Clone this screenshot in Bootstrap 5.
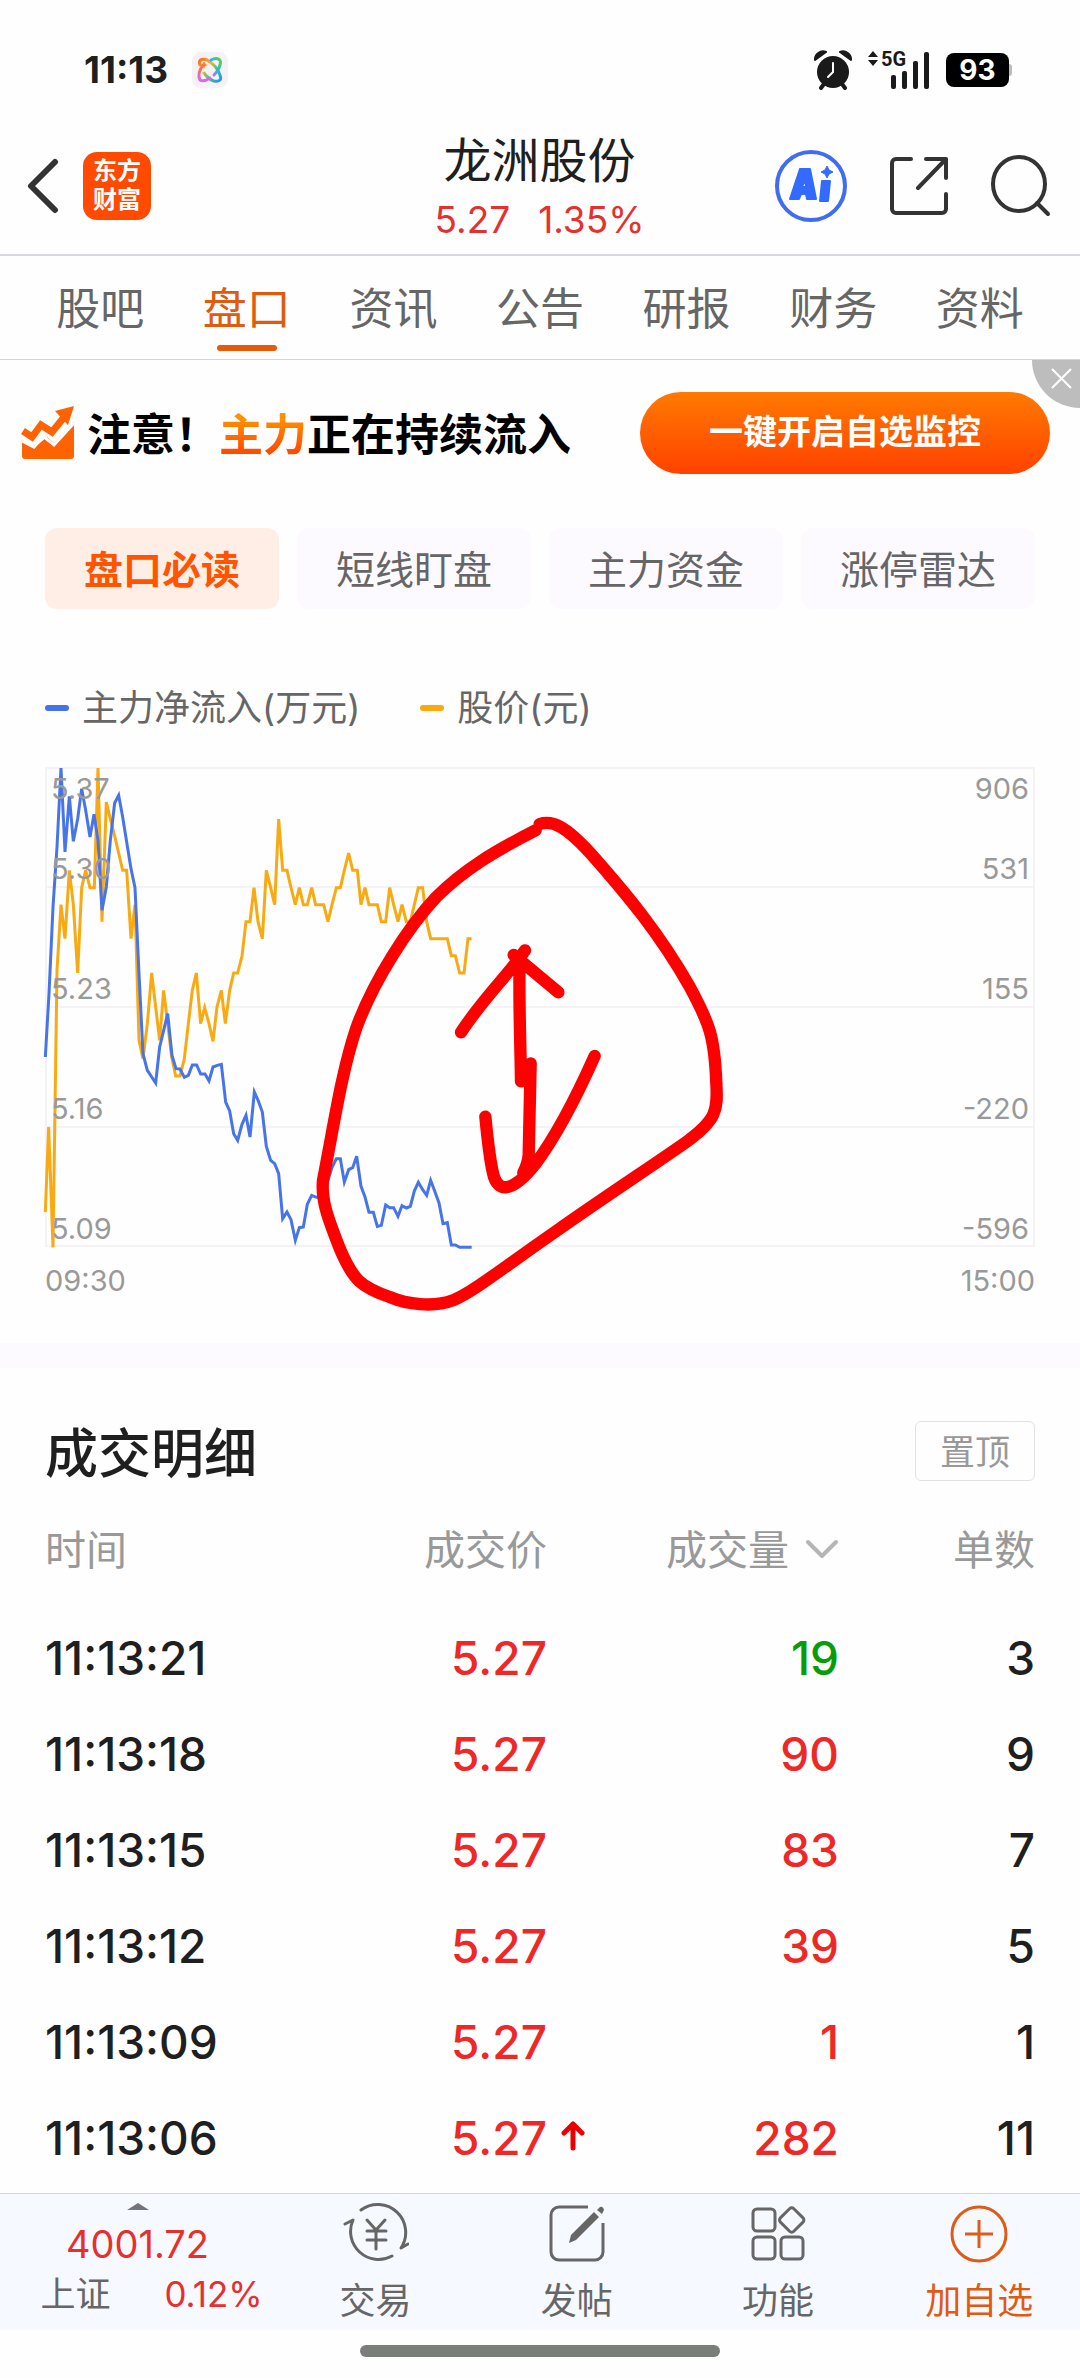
<!DOCTYPE html>
<html lang="zh-CN">
<head>
<meta charset="utf-8">
<meta name="viewport" content="width=device-width, initial-scale=1">
<title>龙洲股份 - 盘口</title>
<link href="https://cdn.jsdelivr.net/npm/bootstrap@5.3.0/dist/css/bootstrap.min.css" rel="stylesheet">
<style>
body{font-family:Inter,"Noto Sans CJK SC",sans-serif;background:#fefefe;color:#1f1f1f;font-weight:400}
button{font-family:inherit}
svg{display:block;flex:none}
.up{color:#e5302e}
.statusbar{height:118px;padding:22px 68px 0 84px}
.clock{font-size:37px;font-weight:700;line-height:56px}
.battery{width:63px;height:34px;border-radius:8px;background:#000;color:#fff;font-size:28px;font-weight:700;line-height:34px;text-align:center}
.nub{width:3px;height:12px;background:#bbb;border-radius:0 3px 3px 0}
.titlebar{height:138px;border-bottom:2px solid #d8d7de;padding:0 28px 0 27px}
.side{flex:1 1 0}
.tools{gap:42px}
.applogo{width:68px;height:68px;border-radius:14px;background:#ff4a00;color:#fff;font-size:24px;font-weight:700;line-height:29px;text-align:center;padding-top:4px}
.stocktitle{padding-top:6px}
.stockname{font-size:48px;line-height:62px}
.quote{font-size:37px;line-height:56px;gap:28px}
.tabs{height:104px;padding:0 27px;border-bottom:1px solid #d6d6da}
.tabs .nav-link{padding:0;height:103px;font-size:44px;line-height:106px;color:#666;position:relative;border-radius:0}
.tabs .nav-link.active{color:#e05a10}
.tabs .nav-link.active::after{content:"";position:absolute;left:50%;margin-left:-30px;bottom:8px;width:60px;height:6px;border-radius:3px;background:#e65a0a}
.banner{height:146px;padding:0 30px 0 21px;position:relative}
.notice{font-size:44px;font-weight:700;color:#000;line-height:60px;margin:3px 0 0 13px}
.hot{background:linear-gradient(#ff9000 20%,#ff4d00 80%);-webkit-background-clip:text;background-clip:text;color:transparent}
.cta{width:410px;height:82px;border:0;border-radius:41px;background:linear-gradient(#ff7a00,#ff4200);color:#fff;font-size:34px;font-weight:700;padding:0 0 4px}
.cta:hover{color:#fff}
.dismiss{position:absolute;right:0;top:0;width:48px;height:48px;border:0;padding:0;background:#bdbdbd;border-radius:0 0 0 48px}
.pane{padding-left:45px;padding-right:45px}
.pills{gap:18px;padding-top:22px}
.pills .btn{flex:1 1 0;height:81px;border:0;border-radius:12px;background:#fdfaff;color:#666;font-size:39px;line-height:56px;padding:2px 0 0}
.pills .btn.active{background:#ffeee6;color:#ff5500;font-weight:700}
.legendrow{padding-top:72px;font-size:36px;line-height:54px;color:#666;gap:60px}
.dash{width:24px;height:6px;border-radius:3px;margin-right:13px}
.chartbox{padding-top:33px;position:relative;z-index:1}
.chartbox svg{width:100%;height:auto;overflow:visible}
.axis{font-size:29px;fill:#999;font-family:Inter,sans-serif}
.times{font-size:29px;line-height:40px;color:#999;padding-top:15px}
.band{height:25px;background:#fdfaff;margin-top:42px}
.sect{padding-top:50px;padding-bottom:7px}
.sect h2{font-size:53px;line-height:60px;font-weight:500;margin:0;padding-top:6px}
.pin{width:120px;height:60px;border:1px solid #e2e2e4;border-radius:6px;background:transparent;color:#999;font-size:35px;line-height:50px;padding:2px 0 0}
.deals{width:100%;table-layout:fixed;margin-top:17px}
.deals th{height:109px;font-size:41px;line-height:60px;font-weight:400;color:#999;padding:0 0 11px;text-align:right;vertical-align:middle}
.deals td{height:96px;font-size:46px;line-height:60px;font-weight:500;padding:0;text-align:right;vertical-align:middle}
.deals th:first-child,.deals td:first-child{text-align:left}
.deals .rise{color:#ee2826}
.deals .fall{color:#089c08}
.tick{position:absolute;left:100%;top:50%;margin:-17px 0 0 14px}
.dock{height:137px;background:#f6f9ff;border-top:1px solid #d3d7da}
.dock a{color:#666;text-decoration:none;font-size:36px;line-height:46px}
.dock .indexbox{width:275px;padding:9px 0 0}
.dock .act{flex:1 1 0;padding-top:8px}
.dock .act span{margin-top:14px}
.dock .addfav{color:#e05a10}
.idx{font-size:38px;line-height:48px;margin-top:10px}
.idxrow{gap:54px;padding:3px 0 0 28px;font-size:35px}
.homearea{height:47px;padding-top:15px}
.homebar{width:360px;height:12px;border-radius:6px;background:#7b7d7a}
</style>
<script src="https://cdn.jsdelivr.net/npm/bootstrap@5.3.0/dist/js/bootstrap.bundle.min.js"></script>
</head>
<body>
<div class="statusbar d-flex align-items-center justify-content-between">
  <div class="d-flex align-items-center">
    <span class="clock">11:13</span>
    <svg class="ms-4" width="36" height="36" viewBox="0 0 36 36" fill="none" stroke-width="3" stroke-linecap="round">
      <defs><linearGradient id="rb" x1="0" y1="0" x2="1" y2="1"><stop offset="0" stop-color="#ff6a1f"/><stop offset=".35" stop-color="#f2b62e"/><stop offset=".65" stop-color="#35c9a0"/><stop offset="1" stop-color="#2c8cf5"/></linearGradient>
      <linearGradient id="rc" x1="1" y1="0" x2="0" y2="1"><stop offset="0" stop-color="#5bd63c"/><stop offset=".5" stop-color="#28b5e8"/><stop offset="1" stop-color="#d768f0"/></linearGradient>
      <linearGradient id="rd" x1="0" y1="0" x2="0" y2="1"><stop offset="0" stop-color="#ff7a22"/><stop offset="1" stop-color="#d768f0"/></linearGradient></defs>
      <rect width="36" height="36" rx="9" fill="#f5f2f5"/>
      <path d="M8 13C6 8 10 6 15 8c7 4 11 9 13 15 2 5-1 7-6 6-4-1-7-4-10-8" stroke="url(#rb)"/>
      <path d="M19 8c6-3 11-1 9 5-1 4-3 7-6 10" stroke="url(#rc)"/>
      <path d="M12 12C7 18 6 24 8 28c3 2 7 0 10-2" stroke="url(#rd)"/>
      <path d="M12 9l1 3 3 1-3 1-1 3-1-3-3-1 3-1z" fill="#ff7a22"/>
    </svg>
  </div>
  <div class="d-flex align-items-center">
    <svg width="38" height="40" viewBox="0 0 38 40">
      <path d="M1 10A8 8 0 0 1 12 2zM37 10A8 8 0 0 0 26 2z" fill="#1a1a1a" stroke="#1a1a1a" stroke-width="2" stroke-linejoin="round"/>
      <circle cx="19" cy="22" r="16" fill="#1a1a1a"/><path d="M10 34l-3 4M28 34l3 4" stroke="#1a1a1a" stroke-width="4" stroke-linecap="round"/>
      <path d="M19 13v9l-5 5" fill="none" stroke="#fff" stroke-width="2" stroke-linecap="round"/>
    </svg>
    <svg class="ms-3" width="62" height="56" viewBox="0 -8 62 56" fill="#1a1a1a">
      <path d="M5 1l5 6H0zM5 16l5-6H0z"/>
      <text x="13" y="16" font-family="Roboto,sans-serif" font-weight="700" font-size="20">5G</text>
      <rect x="23" y="25" width="5" height="14" rx="2"/><rect x="34" y="21" width="5" height="18" rx="2"/><rect x="45" y="11" width="5" height="28" rx="2"/><rect x="56" y="2" width="5" height="37" rx="2"/>
    </svg>
    <span class="battery ms-3">93</span><span class="nub"></span>
  </div>
</div>

<header class="titlebar d-flex align-items-center">
  <div class="side d-flex align-items-center gap-4">
    <a href="#" aria-label="返回"><svg width="32" height="56" viewBox="0 0 32 56" fill="none" stroke="#333" stroke-width="6" stroke-linecap="round" stroke-linejoin="round"><path d="M28 4L4 28l24 24"/></svg></a>
    <div class="applogo">东方<br>财富</div>
  </div>
  <div class="stocktitle text-center">
    <div class="stockname">龙洲股份</div>
    <div class="quote up d-flex justify-content-center"><span>5.27</span><span>1.35%</span></div>
  </div>
  <div class="side tools d-flex align-items-center justify-content-end">
    <a href="#" aria-label="AI"><svg width="74" height="74" viewBox="0 0 74 74"><circle cx="37" cy="37" r="34" fill="#fff" stroke="#3f6cf2" stroke-width="4"/>
      <path d="M26 20h10l6 30h-9l-1-5h-5l-2 5h-9zM31 30l-3 8h4z" fill="#336aff" stroke="#336aff" stroke-width="2" stroke-linejoin="round" fill-rule="evenodd"/>
      <path d="M48 32h8l-2 20h-8z" fill="#336aff" stroke="#336aff" stroke-width="2" stroke-linejoin="round"/><path d="M53 17l2 4 4 2-4 2-2 4-2-4-4-2 4-2z" fill="#336aff" stroke="#336aff" stroke-width="1"/></svg></a>
    <a href="#" aria-label="分享"><svg width="58" height="60" viewBox="0 0 58 60" fill="none" stroke="#333" stroke-width="4" stroke-linecap="round" stroke-linejoin="round"><path d="M21 3H6a4 4 0 0 0-4 4v46a4 4 0 0 0 4 4h46a4 4 0 0 0 4-4V38M36 3h20v19M56 3L28 32"/></svg></a>
    <a href="#" aria-label="搜索"><svg width="62" height="64" viewBox="0 0 62 64" fill="none" stroke="#333" stroke-width="4" stroke-linecap="round"><ellipse cx="29" cy="30" rx="26" ry="27"/><path d="M47 49l11 11"/></svg></a>
  </div>
</header>

<nav class="tabs nav nav-justified flex-nowrap">
  <a class="nav-link" href="#">股吧</a><a class="nav-link active" href="#">盘口</a><a class="nav-link" href="#">资讯</a><a class="nav-link" href="#">公告</a><a class="nav-link" href="#">研报</a><a class="nav-link" href="#">财务</a><a class="nav-link" href="#">资料</a>
</nav>

<main>
<section class="banner d-flex align-items-center justify-content-between">
  <div class="d-flex align-items-center">
    <svg width="53" height="54" viewBox="0 0 53 54"><path d="M1 34l12 8 13-11 7 6L53 16v34a3 3 0 0 1-3 3H4a3 3 0 0 1-3-3z" fill="#ff6200"/><path d="M1 35l12 6 9-11 11 9L53 17" fill="none" stroke="#fefefe" stroke-width="3"/><path d="M2 25l9 6 9-12 11 7L44 10" fill="none" stroke="#ff6200" stroke-width="7"/><path d="M34 5L53 0l-6 19z" fill="#ff6200"/></svg>
    <span class="notice">注意！<span class="hot">主力</span>正在持续流入</span>
  </div>
  <button class="btn cta" type="button">一键开启自选监控</button>
  <button class="dismiss" type="button" aria-label="关闭"><svg width="48" height="48" viewBox="0 0 48 48" stroke="#fff" stroke-width="2"><path d="M20 9l19 19M39 9L20 28"/></svg></button>
</section>

<div class="pane">
  <div class="pills d-flex">
    <button class="btn active" type="button">盘口必读</button><button class="btn" type="button">短线盯盘</button><button class="btn" type="button">主力资金</button><button class="btn" type="button">涨停雷达</button>
  </div>
  <div class="legendrow d-flex">
    <span class="d-flex align-items-center"><i class="dash" style="background:#4472ee"></i>主力净流入(万元)</span>
    <span class="d-flex align-items-center"><i class="dash" style="background:#fba80a"></i>股价(元)</span>
  </div>
  <div class="chartbox">
    <svg viewBox="0 0 990 478" role="img" aria-label="主力净流入与股价">
      <path d="M1 0H989V478H1zM1 119H989M1 239H989M1 359H989" fill="none" stroke="#f4f2f4" stroke-width="2"/>
      <svg x="0" y="0" width="990" height="478" viewBox="136 323 2970 1434" overflow="visible" fill="none">
        <polyline stroke="#f9aa12" stroke-width="9" points="137,1655 147,1400 160,1761 172,930 184,733 196,835 209,630 221,733 234,938 246,682 258,630 271,682 284,682 295,323 307,784 320,425 332,476 345,527 357,578 369,630 381,630 394,835 406,733 418,1140 430,1195 443,1090 456,938 468,1040 480,1140 492,990 504,1090 516,1190 528,1247 541,1247 554,1195 566,1090 578,990 590,938 603,1090 615,1042 628,1090 640,1143 652,1040 665,990 677,1090 690,990 702,938 714,938 727,887 739,784 751,784 763,682 775,784 788,835 800,630 813,682 825,733 837,476 849,630 862,630 874,682 887,733 899,682 911,733 923,733 936,682 948,733 972,733 985,784 997,733 1010,682 1022,682 1034,630 1047,578 1059,630 1073,630 1084,733 1096,682 1108,733 1133,733 1145,784 1158,784 1170,682 1182,733 1195,784 1207,733 1220,784 1232,784 1244,733 1256,682 1269,682 1281,784 1293,835 1343,835 1355,886 1367,886 1380,938 1393,938 1405,835 1416,835"/>
        <polyline stroke="#4774e8" stroke-width="9" points="137,1190 148,1000 160,740 172,560 184,323 196,575 209,408 221,543 234,476 246,385 258,450 271,530 283,462 295,540 307,750 320,680 332,540 345,428 357,405 369,470 381,545 394,625 406,682 418,940 430,1180 443,1230 468,1268 480,1160 492,1110 504,1060 517,1185 529,1225 541,1226 554,1251 566,1245 578,1214 591,1214 603,1241 616,1241 628,1262 640,1220 653,1215 665,1212 678,1325 690,1352 702,1420 714,1440 727,1392 739,1365 751,1430 764,1295 776,1322 788,1355 800,1458 813,1500 825,1510 837,1540 849,1675 862,1655 874,1678 887,1740 899,1702 911,1700 923,1632 936,1605 950,1611 962,1611 985,1560 997,1522 1010,1495 1022,1495 1034,1565 1047,1528 1059,1522 1071,1488 1084,1578 1096,1610 1108,1656 1121,1656 1133,1698 1145,1695 1158,1634 1170,1642 1182,1642 1195,1668 1207,1636 1220,1643 1232,1638 1244,1592 1256,1566 1269,1588 1281,1605 1293,1560 1305,1592 1318,1628 1330,1690 1343,1687 1355,1754 1367,1754 1380,1761 1416,1761"/>
      </svg>
      <g class="axis">
        <text x="6" y="31">5.37</text><text x="6" y="111">5.30</text><text x="6" y="231">5.23</text><text x="6" y="351">5.16</text><text x="6" y="471">5.09</text>
        <g text-anchor="end"><text x="984" y="31">906</text><text x="984" y="111">531</text><text x="984" y="231">155</text><text x="984" y="351">-220</text><text x="984" y="471">-596</text></g>
      </g>
      <svg x="0" y="0" width="990" height="478" viewBox="136 323 2970 1434" overflow="visible" fill="none" stroke="#fe0000" stroke-width="37" stroke-linecap="round" stroke-linejoin="round">
        <path d="M1608 510C1480 575 1390 630 1310 710C1225 800 1120 965 1070 1103C1025 1235 1000 1410 970 1560C964 1620 985 1675 1020 1764C1060 1860 1085 1880 1170 1910C1220 1931 1300 1943 1360 1920C1420 1895 1500 1830 1670 1712C1830 1600 1960 1515 2060 1445C2150 1380 2155 1350 2150 1270C2145 1130 2130 1090 2070 979C1980 820 1880 700 1770 576C1700 500 1660 478 1620 491"/>
        <path d="M1384 1116C1440 1030 1500 970 1552 903L1576 870M1542 884L1676 996M1560 905C1557 1010 1562 1130 1564 1263M1593 1209L1587 1485Q1585 1510 1571 1537M1457 1369Q1470 1505 1483 1550C1500 1600 1545 1590 1607 1511Q1690 1400 1785 1187"/>
      </svg>
    </svg>
  </div>
  <div class="times d-flex justify-content-between"><span>09:30</span><span>15:00</span></div>
</div>

<div class="band"></div>

<section class="pane sect">
  <div class="d-flex justify-content-between align-items-center">
    <h2>成交明细</h2>
    <button class="btn pin" type="button">置顶</button>
  </div>
  <table class="deals">
    <colgroup><col style="width:25%"><col style="width:25.7%"><col style="width:29.5%"><col style="width:19.8%"></colgroup>
    <thead><tr><th>时间</th><th>成交价</th><th><span class="d-inline-flex align-items-center">成交量<svg class="ms-3" width="34" height="22" viewBox="0 0 34 22" fill="none" stroke="#b5b5b8" stroke-width="4" stroke-linecap="round" stroke-linejoin="round"><path d="M3 3l14 14L31 3"/></svg></span></th><th>单数</th></tr></thead>
    <tbody>
      <tr><td>11:13:21</td><td class="rise">5.27</td><td class="fall">19</td><td>3</td></tr>
      <tr><td>11:13:18</td><td class="rise">5.27</td><td class="rise">90</td><td>9</td></tr>
      <tr><td>11:13:15</td><td class="rise">5.27</td><td class="rise">83</td><td>7</td></tr>
      <tr><td>11:13:12</td><td class="rise">5.27</td><td class="rise">39</td><td>5</td></tr>
      <tr><td>11:13:09</td><td class="rise">5.27</td><td class="rise">1</td><td>1</td></tr>
      <tr><td>11:13:06</td><td class="rise"><span class="position-relative">5.27<svg class="tick" width="24" height="30" viewBox="0 0 24 30" fill="none" stroke="#ea0000" stroke-width="5" stroke-linecap="round" stroke-linejoin="round"><path d="M12 27V4M3 12l9-9 9 9"/></svg></span></td><td class="rise">282</td><td>11</td></tr>
    </tbody>
  </table>
</section>
</main>

<footer>
  <nav class="dock d-flex">
    <a class="indexbox d-flex flex-column align-items-center" href="#">
      <svg width="22" height="7" viewBox="0 0 22 7"><path d="M11 0l11 7H0z" fill="#74757b"/></svg>
      <span class="idx up">4001.72</span>
      <span class="idxrow d-flex align-items-center"><span>上证</span><span class="up">0.12%</span></span>
    </a>
    <a class="act d-flex flex-column align-items-center" href="#">
      <svg width="66" height="62" viewBox="0 0 66 62" fill="none" stroke="#666" stroke-width="3" stroke-linecap="round" stroke-linejoin="round"><path d="M18 8A28 28 0 0 1 58 46l7-4M49 54A28 28 0 0 1 10 18l-8 4" /><path d="M24 18l9 10 9-10M33 28v19M24 29h19M24 38h19"/></svg>
      <span>交易</span></a>
    <a class="act d-flex flex-column align-items-center" href="#">
      <svg width="58" height="62" viewBox="0 0 58 62" fill="none" stroke="#666" stroke-width="3"><path d="M40 5H11a8 8 0 0 0-8 8v37a8 8 0 0 0 8 8h36a8 8 0 0 0 8-8V21"/><path d="M21 41l2-8L46 10l5 5-23 23zM49 8l3-3q3-1 4 3l-2 4z" fill="#666" stroke="none"/></svg>
      <span>发帖</span></a>
    <a class="act d-flex flex-column align-items-center" href="#">
      <svg width="56" height="62" viewBox="0 0 56 62" fill="none" stroke="#666" stroke-width="3"><rect x="3" y="7" width="22" height="22" rx="4"/><rect x="3" y="35" width="22" height="22" rx="4"/><rect x="31" y="35" width="22" height="22" rx="4"/><rect x="32" y="8" width="19" height="19" rx="3" transform="rotate(45 41 18)"/></svg>
      <span>功能</span></a>
    <a class="act addfav d-flex flex-column align-items-center" href="#">
      <svg width="58" height="62" viewBox="0 0 58 62" fill="none" stroke="#dd5c16" stroke-width="3"><circle cx="29" cy="32" r="27"/><path d="M15 32h28M29 18v28"/></svg>
      <span>加自选</span></a>
  </nav>
  <div class="homearea"><div class="homebar mx-auto"></div></div>
</footer>
</body>
</html>
